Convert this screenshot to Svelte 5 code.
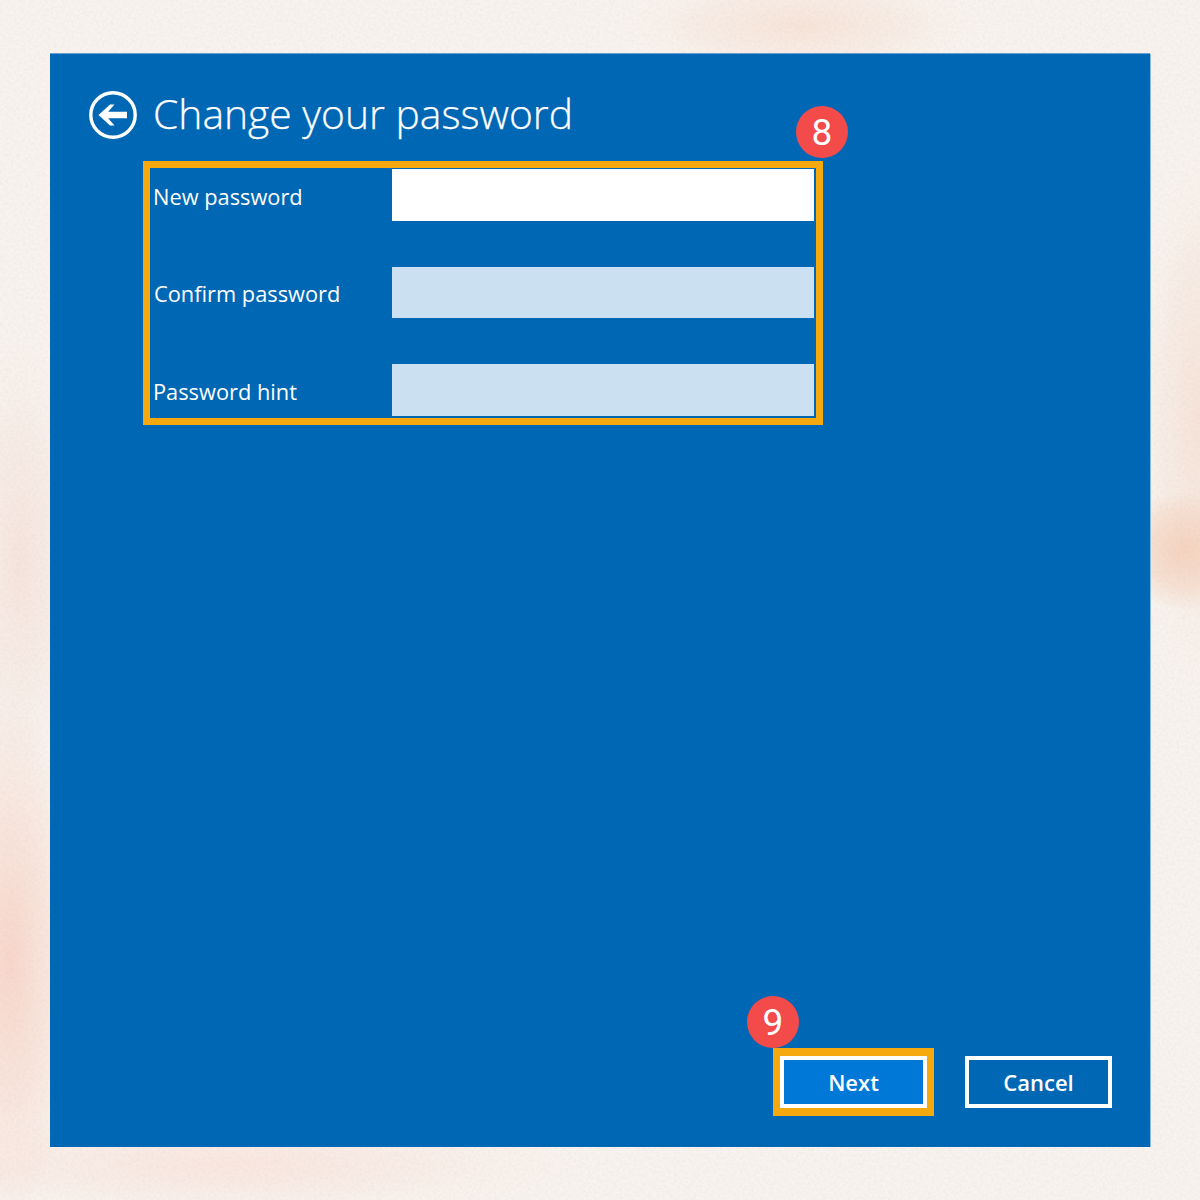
<script>
  const fields = [
    { label: 'New password', cls: 'active' },
    { label: 'Confirm password', cls: '' },
    { label: 'Password hint', cls: '' }
  ];
</script>

<div class="page">
  <svg class="grain" width="1200" height="1200" aria-hidden="true">
    <filter id="paper" x="0" y="0" width="100%" height="100%">
      <feTurbulence type="fractalNoise" baseFrequency="0.35" numOctaves="3" seed="7" />
      <feColorMatrix type="matrix" values="0 0 0 0 0.55  0 0 0 0 0.47  0 0 0 0 0.42  0.7 0 0 0 -0.25" />
    </filter>
    <rect width="1200" height="1200" filter="url(#paper)" opacity="0.32" />
  </svg>
  <main class="panel">
    <header class="head">
      <svg class="back" width="48" height="48" viewBox="0 0 48 48" aria-hidden="true">
        <circle cx="24" cy="24" r="22.2" fill="none" stroke="#fff" stroke-width="3.4" />
        <path d="M9.5 24 L21 13.5 L25.5 13.5 L19.2 20.8 L38 20.8 L38 27.2 L19.2 27.2 L25.5 34.5 L21 34.5 Z" fill="#fff" />
      </svg>
      <h1>Change your password</h1>
    </header>

    <div class="form-wrap">
      <div class="form">
        {#each fields as f}
          <div class="row">
            <span class="label">{f.label}</span>
            <div class="input {f.cls}"></div>
          </div>
        {/each}
      </div>
      <span class="badge b8">8</span>
    </div>

    <div class="spacer"></div>

    <footer class="actions">
      <div class="next-wrap">
        <span class="badge b9">9</span>
        <div class="next-frame"><button class="btn next">Next</button></div>
      </div>
      <button class="btn cancel">Cancel</button>
    </footer>
  </main>
</div>

<style>
  :global(body) { margin: 0; }
  .page {
    position: relative;
    width: 1200px;
    height: 1200px;
    box-sizing: border-box;
    padding: 54px 50px 53px;
    overflow: hidden;
    background:
      radial-gradient(ellipse 70px 60px at 1185px 550px, #f5d3bf 0%, rgba(245,211,191,0.55) 60%, rgba(245,211,191,0) 100%),
      radial-gradient(ellipse 60px 260px at 1200px 420px, #f6e3d8 0%, rgba(246,227,216,0) 100%),
      radial-gradient(ellipse 70px 260px at 10px 960px, #f8d6ca 0%, rgba(248,214,202,0) 100%),
      radial-gradient(ellipse 60px 220px at 20px 560px, #f6e4dd 0%, rgba(246,228,221,0) 100%),
      radial-gradient(ellipse 340px 50px at 230px 1165px, #f9e6df 0%, rgba(249,230,223,0) 100%),
      radial-gradient(ellipse 170px 50px at 800px 25px, #f7e4d9 0%, rgba(247,228,217,0) 100%),
      #f8f3ee;
    font-family: "Open Sans", "Noto Sans", sans-serif;
    color: #fff;
  }
  .grain { position: absolute; left: 0; top: 0; }
  .panel {
    position: relative;
    height: 100%;
    box-sizing: border-box;
    background: #0067b5;
    box-shadow: 0 -1px 0 #5f9fd2, 1px 0 0 #8dbbdf;
    display: flex;
    flex-direction: column;
    padding: 36.5px 38px 31px 39px;
  }
  .head { display: flex; align-items: center; gap: 16px; height: 48px; }
  .back { flex: none; }
  h1 {
    margin: -3px 0 0;
    font-size: 40.8px;
    font-weight: 300;
    line-height: 48px;
    white-space: nowrap;
    -webkit-text-stroke: 0.25px #fff;
  }
  .form-wrap { position: relative; width: 680px; margin: 22.5px 0 0 54px; }
  .form {
    box-sizing: border-box;
    border: 7px solid #f5a90f;
    padding: 1px 2px 2.5px 3px;
    display: flex;
    flex-direction: column;
    gap: 46px;
  }
  .row { display: flex; align-items: center; justify-content: space-between; }
  .row:nth-child(2) .label { margin-left: 1px; }
  .label { font-size: 21.8px; line-height: 44px; padding-top: 4px; }
  .input { width: 422px; height: 51.5px; background: #cbe0f0; }
  .input.active { background: #fff; }
  .badge {
    position: absolute;
    width: 52px;
    height: 52px;
    border-radius: 50%;
    background: #f34a4a;
    display: flex;
    align-items: center;
    justify-content: center;
    font-family: Roboto, "Liberation Sans", sans-serif;
    font-size: 37px;
    font-weight: 400;
    color: #fff;
  }
  .b8 { right: -25px; top: -55px; }
  .b9 { left: -26px; top: -52px; }
  .spacer { flex: 1; }
  .actions { display: flex; justify-content: flex-end; align-items: center; gap: 31px; }
  .next-wrap { position: relative; }
  .next-frame { border: solid #f5a90f; border-width: 8px 7px; display: flex; }
  .btn {
    box-sizing: border-box;
    width: 147px;
    height: 52px;
    margin: 0;
    padding: 0;
    border: 4px solid #fff;
    color: #fff;
    font-family: "Open Sans", "Noto Sans", sans-serif;
    font-size: 22px;
    font-weight: 600;
    background: #0067b5;
  }
  .next { background: #0078d7; }
</style>
